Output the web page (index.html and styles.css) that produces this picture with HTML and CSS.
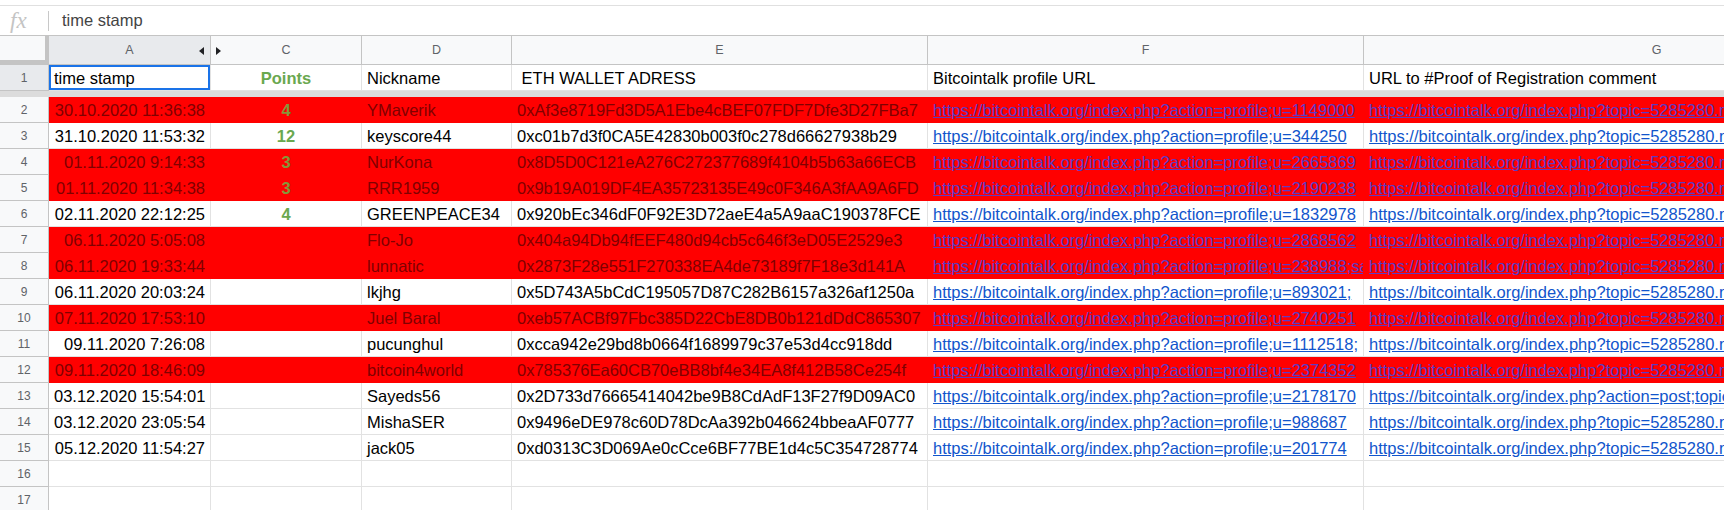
FILE: index.html
```html
<!DOCTYPE html>
<html lang="en">
<head>
    <meta charset="UTF-8">
    <meta name="viewport" content="width=device-width, initial-scale=1.0">
    <title>Registrations</title>
    <link rel="stylesheet" href="styles.css">
</head>

<body>

    <div class="top-strip"></div>
    <div class="formula-bar">
        <span class="fx">fx</span>
        <span class="fx-sep"></span>
        <span class="fx-text">time stamp</span>
    </div>

    <div class="sheet">
        <div class="row heads">
            <div class="corner"></div>
            <div class="col-head selected">A<span class="arrow-left"></span></div>
            <div class="col-head"><span class="arrow-right"></span>C</div>
            <div class="col-head">D</div>
            <div class="col-head">E</div>
            <div class="col-head">F</div>
            <div class="col-head">G</div>
        </div>

        <div class="row">
            <div class="row-num selected">1</div>
            <div class="cell active">time stamp</div>
            <div class="cell center pts">Points</div>
            <div class="cell">Nickname</div>
            <div class="cell">&nbsp;ETH WALLET ADRESS</div>
            <div class="cell">Bitcointalk profile URL</div>
            <div class="cell">URL to #Proof of Registration comment</div>
        </div>

        <div class="freeze-bar"></div>

        <div class="row red">
            <div class="row-num">2</div>
            <div class="cell right">30.10.2020 11:36:38</div>
            <div class="cell center pts">4</div>
            <div class="cell">YMaverik</div>
            <div class="cell">0xAf3e8719Fd3D5A1Ebe4cBEF07FDF7Dfe3D27FBa7</div>
            <div class="cell"><a class="link" href="#">https://bitcointalk.org/index.php?action=profile;u=1149000</a></div>
            <div class="cell"><a class="link" href="#">https://bitcointalk.org/index.php?topic=5285280.msg55480190#msg55480190</a></div>
        </div>

        <div class="row">
            <div class="row-num">3</div>
            <div class="cell right">31.10.2020 11:53:32</div>
            <div class="cell center pts">12</div>
            <div class="cell">keyscore44</div>
            <div class="cell">0xc01b7d3f0CA5E42830b003f0c278d66627938b29</div>
            <div class="cell"><a class="link" href="#">https://bitcointalk.org/index.php?action=profile;u=344250</a></div>
            <div class="cell"><a class="link" href="#">https://bitcointalk.org/index.php?topic=5285280.msg55487023#msg55487023</a></div>
        </div>

        <div class="row red">
            <div class="row-num">4</div>
            <div class="cell right">01.11.2020 9:14:33</div>
            <div class="cell center pts">3</div>
            <div class="cell">NurKona</div>
            <div class="cell">0x8D5D0C121eA276C272377689f4104b5b63a66ECB</div>
            <div class="cell"><a class="link" href="#">https://bitcointalk.org/index.php?action=profile;u=2665869</a></div>
            <div class="cell"><a class="link" href="#">https://bitcointalk.org/index.php?topic=5285280.msg55492270#msg55492270</a></div>
        </div>

        <div class="row red">
            <div class="row-num">5</div>
            <div class="cell right">01.11.2020 11:34:38</div>
            <div class="cell center pts">3</div>
            <div class="cell">RRR1959</div>
            <div class="cell">0x9b19A019DF4EA35723135E49c0F346A3fAA9A6FD</div>
            <div class="cell"><a class="link" href="#">https://bitcointalk.org/index.php?action=profile;u=2190238</a></div>
            <div class="cell"><a class="link" href="#">https://bitcointalk.org/index.php?topic=5285280.msg55493012#msg55493012</a></div>
        </div>

        <div class="row">
            <div class="row-num">6</div>
            <div class="cell right">02.11.2020 22:12:25</div>
            <div class="cell center pts">4</div>
            <div class="cell">GREENPEACE34</div>
            <div class="cell">0x920bEc346dF0F92E3D72aeE4a5A9aaC190378FCE</div>
            <div class="cell"><a class="link" href="#">https://bitcointalk.org/index.php?action=profile;u=1832978</a></div>
            <div class="cell"><a class="link" href="#">https://bitcointalk.org/index.php?topic=5285280.msg55503671#msg55503671</a></div>
        </div>

        <div class="row red">
            <div class="row-num">7</div>
            <div class="cell right">06.11.2020 5:05:08</div>
            <div class="cell"></div>
            <div class="cell">Flo-Jo</div>
            <div class="cell">0x404a94Db94fEEF480d94cb5c646f3eD05E2529e3</div>
            <div class="cell"><a class="link" href="#">https://bitcointalk.org/index.php?action=profile;u=2868562</a></div>
            <div class="cell"><a class="link" href="#">https://bitcointalk.org/index.php?topic=5285280.msg55530122#msg55530122</a></div>
        </div>

        <div class="row red">
            <div class="row-num">8</div>
            <div class="cell right">06.11.2020 19:33:44</div>
            <div class="cell"></div>
            <div class="cell">lunnatic</div>
            <div class="cell">0x2873F28e551F270338EA4de73189f7F18e3d141A</div>
            <div class="cell"><a class="link" href="#">https://bitcointalk.org/index.php?action=profile;u=238988;sa=summary</a></div>
            <div class="cell"><a class="link" href="#">https://bitcointalk.org/index.php?topic=5285280.msg55534419#msg55534419</a></div>
        </div>

        <div class="row">
            <div class="row-num">9</div>
            <div class="cell right">06.11.2020 20:03:24</div>
            <div class="cell"></div>
            <div class="cell">lkjhg</div>
            <div class="cell">0x5D743A5bCdC195057D87C282B6157a326af1250a</div>
            <div class="cell"><a class="link" href="#">https://bitcointalk.org/index.php?action=profile;u=893021;</a></div>
            <div class="cell"><a class="link" href="#">https://bitcointalk.org/index.php?topic=5285280.msg55534650#msg55534650</a></div>
        </div>

        <div class="row red">
            <div class="row-num">10</div>
            <div class="cell right">07.11.2020 17:53:10</div>
            <div class="cell"></div>
            <div class="cell">Juel Baral</div>
            <div class="cell">0xeb57ACBf97Fbc385D22CbE8DB0b121dDdC865307</div>
            <div class="cell"><a class="link" href="#">https://bitcointalk.org/index.php?action=profile;u=2740251</a></div>
            <div class="cell"><a class="link" href="#">https://bitcointalk.org/index.php?topic=5285280.msg55541205#msg55541205</a></div>
        </div>

        <div class="row">
            <div class="row-num">11</div>
            <div class="cell right">09.11.2020 7:26:08</div>
            <div class="cell"></div>
            <div class="cell">pucunghul</div>
            <div class="cell">0xcca942e29bd8b0664f1689979c37e53d4cc918dd</div>
            <div class="cell"><a class="link" href="#">https://bitcointalk.org/index.php?action=profile;u=1112518;</a></div>
            <div class="cell"><a class="link" href="#">https://bitcointalk.org/index.php?topic=5285280.msg55553047#msg55553047</a></div>
        </div>

        <div class="row red">
            <div class="row-num">12</div>
            <div class="cell right">09.11.2020 18:46:09</div>
            <div class="cell"></div>
            <div class="cell">bitcoin4world</div>
            <div class="cell">0x785376Ea60CB70eBB8bf4e34EA8f412B58Ce254f</div>
            <div class="cell"><a class="link" href="#">https://bitcointalk.org/index.php?action=profile;u=2374352</a></div>
            <div class="cell"><a class="link" href="#">https://bitcointalk.org/index.php?topic=5285280.msg55557130#msg55557130</a></div>
        </div>

        <div class="row">
            <div class="row-num">13</div>
            <div class="cell right">03.12.2020 15:54:01</div>
            <div class="cell"></div>
            <div class="cell">Sayeds56</div>
            <div class="cell">0x2D733d76665414042be9B8CdAdF13F27f9D09AC0</div>
            <div class="cell"><a class="link" href="#">https://bitcointalk.org/index.php?action=profile;u=2178170</a></div>
            <div class="cell"><a class="link" href="#">https://bitcointalk.org/index.php?action=post;topic=5285280.0</a></div>
        </div>

        <div class="row">
            <div class="row-num">14</div>
            <div class="cell right">03.12.2020 23:05:54</div>
            <div class="cell"></div>
            <div class="cell">MishaSER</div>
            <div class="cell">0x9496eDE978c60D78DcAa392b046624bbeaAF0777</div>
            <div class="cell"><a class="link" href="#">https://bitcointalk.org/index.php?action=profile;u=988687</a></div>
            <div class="cell"><a class="link" href="#">https://bitcointalk.org/index.php?topic=5285280.msg55760811#msg55760811</a></div>
        </div>

        <div class="row">
            <div class="row-num">15</div>
            <div class="cell right">05.12.2020 11:54:27</div>
            <div class="cell"></div>
            <div class="cell">jack05</div>
            <div class="cell">0xd0313C3D069Ae0cCce6BF77BE1d4c5C354728774</div>
            <div class="cell"><a class="link" href="#">https://bitcointalk.org/index.php?action=profile;u=201774</a></div>
            <div class="cell"><a class="link" href="#">https://bitcointalk.org/index.php?topic=5285280.msg55771294#msg55771294</a></div>
        </div>

        <div class="row">
            <div class="row-num">16</div>
            <div class="cell"></div>
            <div class="cell"></div>
            <div class="cell"></div>
            <div class="cell"></div>
            <div class="cell"></div>
            <div class="cell"></div>
        </div>

        <div class="row">
            <div class="row-num">17</div>
            <div class="cell"></div>
            <div class="cell"></div>
            <div class="cell"></div>
            <div class="cell"></div>
            <div class="cell"></div>
            <div class="cell"></div>
        </div>
    </div>

</body>
</html>
```

FILE: styles.css
```css
* {
    margin: 0;
    padding: 0;
    box-sizing: border-box;
}

body {
    width: 1724px;
    height: 510px;
    overflow: hidden;
    background: #fff;
    font-family: "Liberation Sans", Arial, sans-serif;
}

/* formula bar */
.top-strip {
    height: 5px;
}

.formula-bar {
    height: 30px;
    border-top: 1px solid #e0e0e0;
    display: flex;
    align-items: center;
}

.fx {
    width: 48px;
    padding-left: 10px;
    font-family: "Liberation Serif", serif;
    font-style: italic;
    font-size: 23px;
    color: #c4c4c4;
}

.fx-sep {
    width: 1px;
    height: 20px;
    background: #c8c8c8;
}

.fx-text {
    margin-left: 13px;
    font-size: 16.5px;
    color: #444;
}

/* grid */
.sheet {
    width: 1950px;
}

.row {
    display: grid;
    grid-template-columns: 49px 162px 151px 150px 416px 436px 586px;
    height: 26px;
}

.row.heads {
    height: 30px;
    border-top: 1px solid #c4c4c4;
}

.corner {
    background: #f8f9fa;
    border-bottom: 1px solid #c4c4c4;
    box-shadow: inset -4px 0 0 #c4c4c4, inset 0 -4px 0 #c4c4c4;
}

.col-head {
    position: relative;
    display: flex;
    align-items: center;
    justify-content: center;
    background: #f8f9fa;
    border-right: 1px solid #c4c4c4;
    border-bottom: 1px solid #c4c4c4;
    font-size: 12.5px;
    color: #5f6368;
}

.col-head.selected {
    background: #e8eaed;
}

.arrow-left,
.arrow-right {
    position: absolute;
    top: 11px;
    width: 0;
    height: 0;
    border-top: 4px solid transparent;
    border-bottom: 4px solid transparent;
}

.arrow-left {
    right: 6px;
    border-right: 5px solid #202124;
}

.arrow-right {
    left: 5px;
    border-left: 5px solid #202124;
}

.row-num {
    display: flex;
    align-items: center;
    justify-content: center;
    background: #f8f9fa;
    border-right: 1px solid #c4c4c4;
    border-bottom: 1px solid #c4c4c4;
    font-size: 12px;
    color: #5f6368;
}

.row-num.selected {
    background: #e8eaed;
}

.freeze-bar {
    height: 6px;
    background: #dcdcdc;
}

.cell {
    padding: 0 5px;
    border-right: 1px solid #e2e2e2;
    border-bottom: 1px solid #e2e2e2;
    font-size: 16.5px;
    line-height: 27px;
    color: #000;
    white-space: nowrap;
    overflow: hidden;
}

.cell.active {
    box-shadow: inset 0 0 0 2px #1a73e8;
}

.right {
    text-align: right;
}

.center {
    text-align: center;
}

.pts {
    color: #6aa84f;
    font-weight: bold;
}

.link {
    color: #1155cc;
    text-decoration: underline;
}

/* rows flagged red */
.red .cell {
    background: #ff0000;
    border-color: #ff0000;
    color: #800000;
}

.red .pts {
    color: #84963a;
}

.red .link {
    color: #5b3cc4;
}
```
